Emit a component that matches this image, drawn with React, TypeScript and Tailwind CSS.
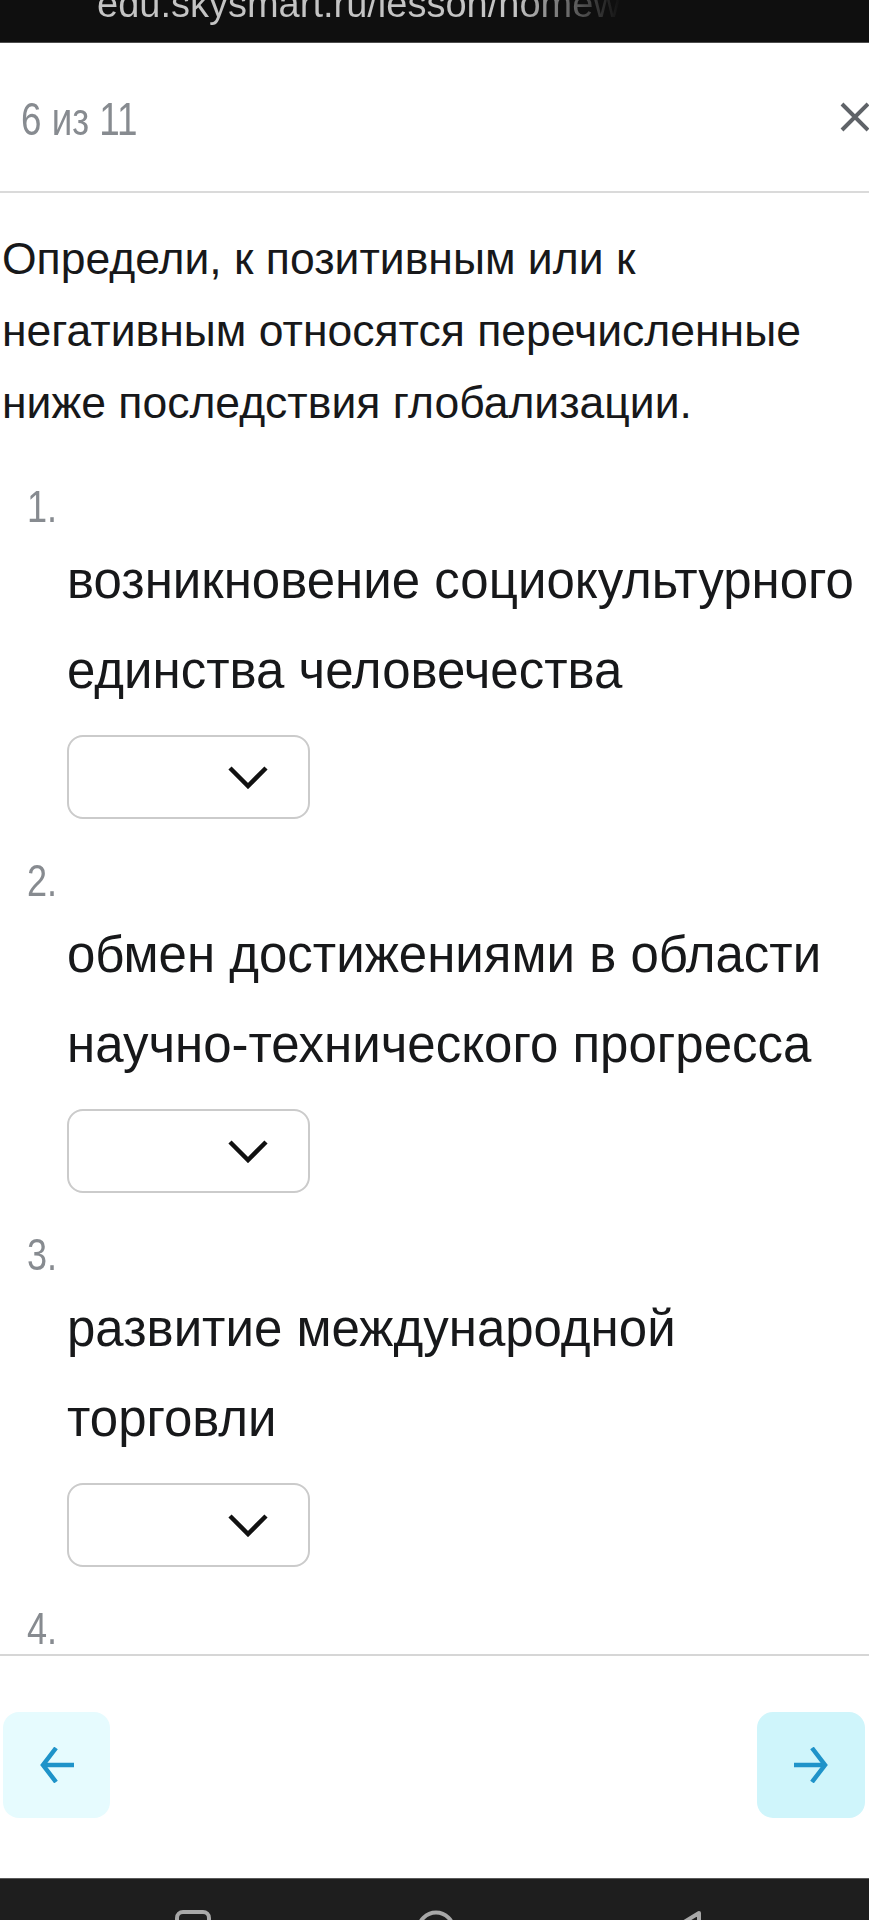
import React from 'react';

type Item = { n: number; text?: string };

const items: Item[] = [
  { n: 1, text: 'возникновение социокультурного единства человечества' },
  { n: 2, text: 'обмен достижениями в области научно-технического прогресса' },
  { n: 3, text: 'развитие международной торговли' },
  { n: 4 },
];

const Chevron = () => (
  <svg width="40" height="24" viewBox="0 0 40 24" fill="none">
    <path d="M2 3 L20 21 L38 3" stroke="#111111" strokeWidth="4.5" />
  </svg>
);

const Arrow = ({ dir }: { dir: 'left' | 'right' }) => (
  <svg width="36" height="36" viewBox="0 0 36 36" fill="none" className={dir === 'right' ? '-scale-x-100' : ''}>
    <path d="M35 18 H4" stroke="#1f93c9" strokeWidth="4.5" />
    <path d="M17 1 L4 18 L17 35" stroke="#1f93c9" strokeWidth="4.5" />
  </svg>
);

const Dropdown = () => (
  <button className="w-[243px] h-[84px] border-2 border-[#cbcbcb] rounded-[16px] bg-white flex items-center justify-end pr-[40px]">
    <Chevron />
  </button>
);

const TaskItem = ({ item }: { item: Item }) => (
  <div className="mb-[38px]">
    <div className="pl-[27px] h-[48px] text-[44px] leading-[48px] text-[#878b90]">
      <span className="inline-block origin-left scale-x-[0.82]">{item.n}.</span>
    </div>
    {item.text && (
      <div className="pl-[67px] mt-[5px]">
        <p className="max-w-[800px] text-[51px] leading-[90px] text-[#17181a]">{item.text}</p>
        <div className="mt-[19px]">
          <Dropdown />
        </div>
      </div>
    )}
  </div>
);

export default function App() {
  return (
    <div className="w-[869px] h-[1920px] overflow-hidden bg-white flex flex-col font-['Liberation_Sans',Arial,sans-serif]">
      {/* browser url bar, mostly scrolled off */}
      <div className="h-[43px] shrink-0 bg-[#0f0f0f] border-b border-[#4d4d4d] overflow-hidden">
        <div className="pl-[97px] -mt-[15px] text-[38px] leading-[38px] whitespace-nowrap">
          <span className="bg-linear-to-r from-[#c4c4c4] from-80% to-transparent to-100% bg-clip-text text-transparent">
            edu.skysmart.ru/lesson/homew
          </span>
        </div>
      </div>

      {/* header */}
      <div className="h-[150px] shrink-0 border-b-2 border-[#dadada] flex items-center justify-between pl-[21px]">
        <span className="inline-block origin-left scale-x-[0.8] pt-[3px] text-[46px] leading-[46px] text-[#878b90]">6 из 11</span>
        <svg width="32" height="32" viewBox="0 0 32 32" fill="none" className="-mr-[2px]">
          <path d="M3 3 L29 29 M29 3 L3 29" stroke="#5f6368" strokeWidth="4" />
        </svg>
      </div>

      {/* task content */}
      <div className="h-[1461px] shrink-0 overflow-hidden pt-[30px]">
        <p className="pl-[2px] max-w-[820px] text-[44.5px] leading-[72px] text-[#17181a]">
          Определи, к позитивным или к негативным относятся перечисленные ниже последствия глобализации.
        </p>
        <div className="mt-[44px]">
          {items.map((item) => (
            <TaskItem key={item.n} item={item} />
          ))}
        </div>
      </div>

      {/* footer nav */}
      <div className="h-[224px] shrink-0 border-t-2 border-[#d6d6d6] pt-[56px] pl-[3px] pr-[4px] flex justify-between items-start">
        <button className="w-[107px] h-[106px] rounded-[16px] bg-[#e6fbfe] flex items-center justify-center">
          <Arrow dir="left" />
        </button>
        <button className="w-[108px] h-[106px] rounded-[16px] bg-[#cff5fb] flex items-center justify-center">
          <Arrow dir="right" />
        </button>
      </div>

      {/* android nav bar */}
      <div className="h-[42px] shrink-0 bg-[#1e1e1e] border-t border-[#5a5a5a] overflow-hidden flex items-start pt-[31px] pl-[175px]">
        <svg width="36" height="40" viewBox="0 0 36 40" fill="none">
          <rect x="2" y="2" width="32" height="36" rx="6" stroke="#a8a8a8" strokeWidth="4" />
        </svg>
        <svg width="40" height="40" viewBox="0 0 40 40" fill="none" className="ml-[205px]">
          <circle cx="20" cy="20" r="17.5" stroke="#a8a8a8" strokeWidth="4" />
        </svg>
        <svg width="34" height="40" viewBox="0 0 34 40" fill="none" className="ml-[212px]">
          <path d="M31 3 L3 20 L31 37 Z" stroke="#a8a8a8" strokeWidth="4" strokeLinejoin="round" />
        </svg>
      </div>
    </div>
  );
}
